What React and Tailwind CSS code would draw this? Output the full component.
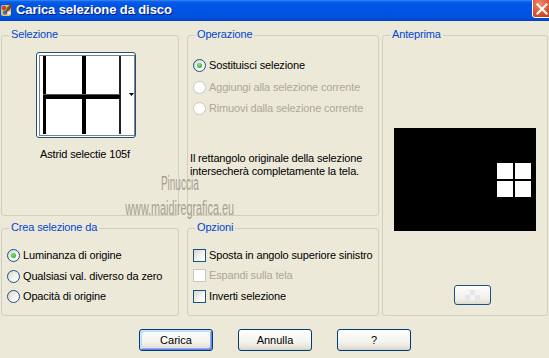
import React from 'react';

const ui = { fontFamily: '"Liberation Sans", Arial, sans-serif' };

function Radio({ checked, disabled }) {
  return (
    <span
      className={`w-[13px] h-[13px] rounded-full border flex items-center justify-center shrink-0 ${
        disabled
          ? 'border-[#CAC8BB] bg-white'
          : 'border-[#1C5180] bg-[linear-gradient(135deg,#D6D5CC_0%,#F4F4F0_55%,#FFFFFF_100%)]'
      }`}
    >
      {checked && (
        <span className="w-[5px] h-[5px] rounded-full bg-[radial-gradient(circle_at_40%_35%,#7EE37A,#20A020)]" />
      )}
    </span>
  );
}

function Check({ disabled }) {
  return (
    <span
      className={`w-[13px] h-[13px] border shrink-0 ${
        disabled
          ? 'border-[#CAC8BB] bg-white'
          : 'border-[#1C5180] bg-[linear-gradient(135deg,#D6D5CC_0%,#F4F4F0_55%,#FFFFFF_100%)]'
      }`}
    />
  );
}

function Group({ label, className = '', children }) {
  return (
    <div className={`relative border border-[#D0D0BF] rounded-[3px] ${className}`}>
      <span className="absolute top-[-8px] left-[7px] px-[2px] leading-[13px] text-[11px] tracking-[-0.15px] text-[#0046D5] bg-[#ECE9D8]">
        {label}
      </span>
      {children}
    </div>
  );
}

function Option({ control, text, disabled, className = '' }) {
  return (
    <div className={`flex items-center h-[13px] ${className}`}>
      {control}
      <span className={`ml-[3px] text-[11px] leading-[13px] tracking-[-0.15px] whitespace-nowrap ${disabled ? 'text-[#ACA899]' : 'text-black'}`}>
        {text}
      </span>
    </div>
  );
}

function XpButton({ children, isDefault }) {
  return (
    <button
      className={`w-[74px] h-[22px] rounded-[3px] border border-[#003C74] text-[11px] text-black bg-[linear-gradient(to_bottom,#FFFFFF_0%,#F4F3EE_60%,#E3E0D5_90%,#D6D0C5_100%)] ${
        isDefault
          ? 'shadow-[inset_1px_1px_0_#CEE7FF,inset_-1px_-1px_0_#6982EE,inset_2px_2px_0_#BCD4F6,inset_-2px_-2px_0_#89ADE4]'
          : ''
      }`}
    >
      {children}
    </button>
  );
}

function AppIcon() {
  return (
    <svg width="13" height="14" viewBox="0 0 13 14">
      <rect x="1" y="2" width="10" height="11" rx="2" fill="#E8C060" />
      <circle cx="4" cy="5" r="2.3" fill="#D33B2B" />
      <circle cx="8.5" cy="5.5" r="2" fill="#3E9C3A" />
      <circle cx="5" cy="9.5" r="2.2" fill="#3A6FD6" />
      <circle cx="9" cy="10" r="1.6" fill="#F5EDE0" />
      <path d="M10 1 L12.5 3.5 L6 10 L5 9 Z" fill="#7A4A22" />
    </svg>
  );
}

function SelectionThumb() {
  return (
    <div className="w-[100px] h-[86px] rounded-[3px] border border-[#1C5180] bg-white">
      <svg width="98" height="84" viewBox="0 0 98 84">
        <rect x="2.5" y="2.5" width="95" height="80" fill="none" stroke="#000" strokeDasharray="1 1" />
        <rect x="6" y="3" width="3" height="78" fill="#000" />
        <rect x="45" y="3" width="4" height="78" fill="#000" />
        <rect x="82" y="3" width="2" height="78" fill="#222" />
        <rect x="6" y="41" width="77" height="5" fill="#000" />
        <rect x="6" y="41" width="77" height="1" fill="#555" />
        <path d="M92 40 L97 40 L94.5 43 Z" fill="#000" />
      </svg>
    </div>
  );
}

export default function App() {
  return (
    <div className="w-[549px] h-[358px] overflow-hidden bg-[#ECE9D8] relative" style={ui}>
      {/* title bar */}
      <div className="h-[21px] flex items-start overflow-hidden bg-[linear-gradient(to_bottom,#3B8CF5_0%,#0A5FE8_8%,#0055E5_20%,#0054E3_60%,#0050DC_85%,#0040C8_100%)]">
        <div className="pt-[3px]">
          <AppIcon />
        </div>
        <span
          className="ml-[3px] mt-[2px] text-[13px] leading-[16px] font-bold text-white tracking-[-0.1px] [text-shadow:1px_1px_0_#0A1883]"
        >
          Carica selezione da disco
        </span>
        <div className="ml-auto mr-[-5px] mt-[-4px] w-[22px] h-[22px] rounded-[3px] border border-white bg-[radial-gradient(circle_at_35%_35%,#F08A6C,#DA4A26_60%,#C0391A)] flex items-center justify-center">
          <svg width="12" height="12" viewBox="0 0 12 12" className="mt-[3px] mr-[2px]">
            <path d="M1.5 1.5 L10.5 10.5 M10.5 1.5 L1.5 10.5" stroke="#fff" strokeWidth="2.2" strokeLinecap="square" />
          </svg>
        </div>
      </div>

      <div className="flex pl-[1px] pt-[14px]">
        <div className="grid grid-cols-[178px_192px] grid-rows-[181px_88px] gap-x-[8px] gap-y-[12px]">
          <Group label="Selezione" className="flex flex-col">
            <div className="pl-[34px] pt-[16px]">
              <SelectionThumb />
            </div>
            <div className="w-[100px] ml-[33px] mt-[10px] text-center text-[11px] leading-[13px] tracking-[-0.15px] whitespace-nowrap">
              Astrid selectie 105f
            </div>
          </Group>

          <Group label="Operazione" className="flex flex-col pl-[5px]">
            <Option className="mt-[23px]" control={<Radio checked />} text="Sostituisci selezione" />
            <Option className="mt-[9px]" control={<Radio disabled />} text="Aggiungi alla selezione corrente" disabled />
            <Option className="mt-[8px]" control={<Radio disabled />} text="Rimuovi dalla selezione corrente" disabled />
            <p className="mt-[37px] ml-[-3px] text-[11px] leading-[13px] tracking-[-0.15px]">
              Il rettangolo originale della selezione
              <br />
              intersecherà completamente la tela.
            </p>
          </Group>

          <Group label="Crea selezione da" className="flex flex-col pl-[5px]">
            <Option className="mt-[20px]" control={<Radio checked />} text="Luminanza di origine" />
            <Option className="mt-[8px]" control={<Radio />} text="Qualsiasi val. diverso da zero" />
            <Option className="mt-[7px]" control={<Radio />} text="Opacità di origine" />
          </Group>

          <Group label="Opzioni" className="flex flex-col pl-[5px]">
            <Option className="mt-[20px]" control={<Check />} text="Sposta in angolo superiore sinistro" />
            <Option className="mt-[7px]" control={<Check disabled />} text="Espandi sulla tela" disabled />
            <Option className="mt-[8px]" control={<Check />} text="Inverti selezione" />
          </Group>
        </div>

        <Group label="Anteprima" className="ml-[3px] w-[166px] h-[281px] flex flex-col">
          <div className="ml-[11px] mt-[92px] w-[142px] h-[103px] bg-black pl-[103px] pt-[35px]">
            <div className="grid grid-cols-[16px_16px] grid-rows-[16px_16px] gap-[2px]">
              <div className="bg-white" />
              <div className="bg-white" />
              <div className="bg-white" />
              <div className="bg-white" />
            </div>
          </div>
          <div className="ml-[71px] mt-[54px] w-[37px] h-[20px] rounded-[3px] border border-[#1C5180] bg-[linear-gradient(to_bottom,#FFFFFF,#F0EFEA_70%,#DEDBD0)] flex items-center justify-center">
            <div className="grid grid-cols-[5px_5px_5px] grid-rows-[5px_5px]">
              <div className="bg-[#F4F4F4]" />
              <div className="bg-[#E6E6E6]" />
              <div className="bg-[#F4F4F4]" />
              <div className="bg-[#E6E6E6]" />
              <div className="bg-[#F4F4F4]" />
              <div className="bg-[#E6E6E6]" />
            </div>
          </div>
        </Group>
      </div>

      <div className="flex gap-[25px] pl-[139px] mt-[13px]">
        <XpButton isDefault>Carica</XpButton>
        <XpButton>Annulla</XpButton>
        <XpButton>?</XpButton>
      </div>

      {/* watermark */}
      <div className="absolute left-[110px] top-[172px] w-[140px] flex flex-col items-center pointer-events-none text-[#9C998E] opacity-90">
        <span className="text-[20px] leading-[22px] scale-x-[0.5]">Pinuccia</span>
        <span className="text-[20px] leading-[22px] scale-x-[0.54] mt-[3px]">www.maidiregrafica.eu</span>
      </div>
    </div>
  );
}
